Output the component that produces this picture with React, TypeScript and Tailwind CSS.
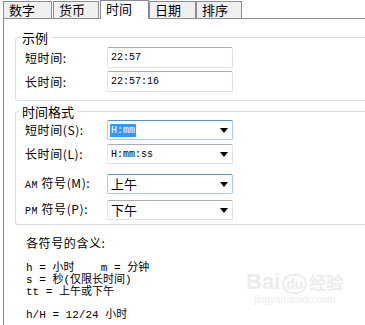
const cjk = "font-['SimSun','Noto_Sans_CJK_SC',sans-serif]"
const mono = "font-['Liberation_Mono','Noto_Sans_CJK_SC',monospace]"

function Tab({ label, w, active }: { label: string; w: string; active?: boolean }) {
  if (active) {
    return (
      <div
        className={`${w} relative z-10 -mb-px h-[19px] border border-b-0 border-[#898c95] bg-white pl-[5px] text-[13px] leading-[15px] text-black`}
      >
        {label}
      </div>
    )
  }
  return (
    <div
      className={`${w} mt-[1px] h-[17px] border border-b-0 border-[#898c95] bg-[#f0f0f0] pl-[5px] text-[13px] leading-[16px] text-black`}
    >
      {label}
    </div>
  )
}

function TextBox({ value }: { value: string }) {
  return (
    <div
      className={`flex h-[21px] w-[126px] items-center rounded-[2px] border border-[#dde3e9] border-t-[#abadb3] pl-[3px] text-[10px] text-black ${mono}`}
    >
      {value}
    </div>
  )
}

function Arrow() {
  return (
    <svg width="8" height="5" viewBox="0 0 8 5" className="ml-auto mr-[4px]">
      <path d="M0 0H8L4 5Z" fill="#000" />
    </svg>
  )
}

function Combo({ children, focus }: { children: React.ReactNode; focus?: boolean }) {
  return (
    <div
      className={`flex h-[20px] w-[126px] items-center rounded-[2px] border pl-[2px] ${
        focus ? "border-[#a9cde6] border-t-[#5893c2]" : "border-[#dde3e9] border-t-[#abadb3]"
      }`}
    >
      {children}
      <Arrow />
    </div>
  )
}

function Row({ label, children, className = "" }: { label: React.ReactNode; children: React.ReactNode; className?: string }) {
  return (
    <div className={`flex items-center ${className}`}>
      <div className="w-[82px] text-[12px] leading-[14px] tracking-[0.6px] text-black">{label}</div>
      {children}
    </div>
  )
}

export default function App() {
  return (
    <div className={`relative h-[325px] w-[365px] overflow-hidden bg-white ${cjk}`}>
      <div className="flex h-[18px] pl-[3px]">
        <Tab label="数字" w="w-[49px]" />
        <div className="w-[1px]" />
        <Tab label="货币" w="w-[46px]" />
        <div className="w-[1px]" />
        <Tab label="时间" w="w-[49px]" active />
        <Tab label="日期" w="w-[47px]" />
        <Tab label="排序" w="w-[46px]" />
      </div>

      <div className="ml-[3px] h-[307px] border-l border-t border-[#898c95] bg-white">
        <fieldset className="ml-[11px] mt-[11px] w-[360px] rounded-[3px] border border-[#d5dfe5] pb-[8px]">
          <legend className="ml-[3px] px-[3px] text-[13px] leading-[15px] text-black">示例</legend>
          <div className="flex flex-col gap-[3px] pl-[9px] pt-[2px]">
            <Row label="短时间:">
              <TextBox value="22:57" />
            </Row>
            <Row label="长时间:">
              <TextBox value="22:57:16" />
            </Row>
          </div>
        </fieldset>

        <fieldset className="ml-[11px] mt-[3px] w-[360px] rounded-[3px] border border-[#d5dfe5] pb-[4px]">
          <legend className="ml-[3px] px-[3px] text-[13px] leading-[15px] text-black">时间格式</legend>
          <div className="flex flex-col pl-[9px] pt-[1px]">
            <Row label="短时间(S):">
              <Combo focus>
                <span className={`bg-[#3399ff] px-[1px] text-[10px] leading-[13px] text-white ${mono}`}>H:mm</span>
              </Combo>
            </Row>
            <Row label="长时间(L):" className="mt-[4px]">
              <Combo>
                <span className={`pl-[1px] text-[10px] text-black ${mono}`}>H:mm:ss</span>
              </Combo>
            </Row>
            <Row
              label={
                <span>
                  <span className={`text-[10px] ${mono}`}>AM</span> 符号(M):
                </span>
              }
              className="mt-[10px]"
            >
              <Combo focus>
                <span className="pl-[1px] text-[13px] text-black">上午</span>
              </Combo>
            </Row>
            <Row
              label={
                <span>
                  <span className={`text-[10px] ${mono}`}>PM</span> 符号(P):
                </span>
              }
              className="mt-[6px]"
            >
              <Combo>
                <span className="pl-[1px] text-[13px] text-black">下午</span>
              </Combo>
            </Row>
          </div>
        </fieldset>

        <div className="pl-[22px] pt-[11px] text-[12px] text-black">
          <div className="leading-[14px] tracking-[0.6px]">各符号的含义:</div>
          <div className={`mt-[12px] whitespace-pre text-[11px] leading-[12px] ${mono}`}>
            <div>h = 小时    m = 分钟</div>
            <div>s = 秒(仅限长时间)</div>
            <div>tt = 上午或下午</div>
            <div className="mt-[11px]">h/H = 12/24 小时</div>
          </div>
        </div>
      </div>

      <div className="pointer-events-none absolute left-[246px] top-[270px] flex flex-col items-center text-[#ececec]">
        <div className="flex items-end text-[22px] font-bold leading-[24px] font-['Liberation_Sans',sans-serif]">
          <span>Bai</span>
          <span className="mx-[2px] rounded-full border-2 border-[#ececec] px-[2px] text-[14px] leading-[16px]">du</span>
          <span className={`text-[17px] ${cjk}`}>经验</span>
        </div>
        <div className="text-[10px] leading-[12px] font-['Liberation_Sans',sans-serif]">jingyan.baidu.com</div>
      </div>
    </div>
  )
}
